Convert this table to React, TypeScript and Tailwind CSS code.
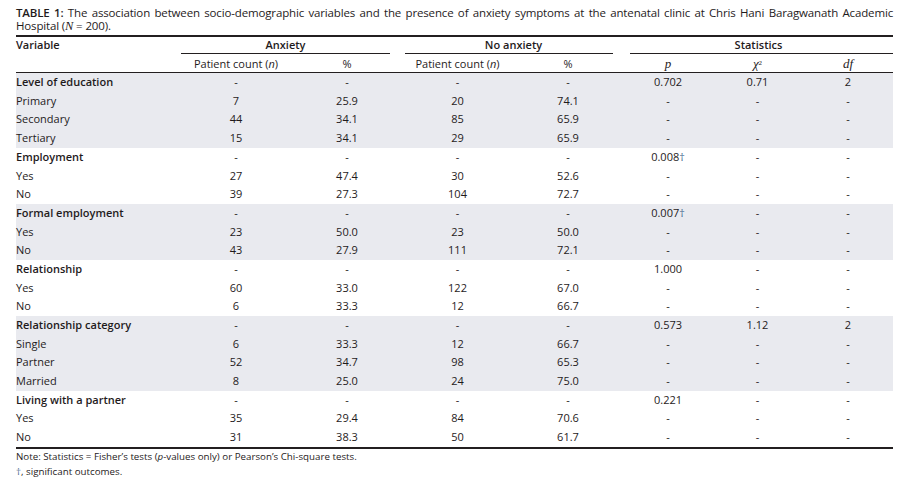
type Row = { label: string; head?: boolean; cells: string[] };

type Group = { rows: Row[] };

const groups: Group[] = [
  {
    rows: [
      { label: "Level of education", head: true, cells: ["-", "-", "-", "-", "0.702", "0.71", "2"] },
      { label: "Primary", cells: ["7", "25.9", "20", "74.1", "-", "-", "-"] },
      { label: "Secondary", cells: ["44", "34.1", "85", "65.9", "-", "-", "-"] },
      { label: "Tertiary", cells: ["15", "34.1", "29", "65.9", "-", "-", "-"] },
    ],
  },
  {
    rows: [
      { label: "Employment", head: true, cells: ["-", "-", "-", "-", "0.008†", "-", "-"] },
      { label: "Yes", cells: ["27", "47.4", "30", "52.6", "-", "-", "-"] },
      { label: "No", cells: ["39", "27.3", "104", "72.7", "-", "-", "-"] },
    ],
  },
  {
    rows: [
      { label: "Formal employment", head: true, cells: ["-", "-", "-", "-", "0.007†", "-", "-"] },
      { label: "Yes", cells: ["23", "50.0", "23", "50.0", "-", "-", "-"] },
      { label: "No", cells: ["43", "27.9", "111", "72.1", "-", "-", "-"] },
    ],
  },
  {
    rows: [
      { label: "Relationship", head: true, cells: ["-", "-", "-", "-", "1.000", "-", "-"] },
      { label: "Yes", cells: ["60", "33.0", "122", "67.0", "-", "-", "-"] },
      { label: "No", cells: ["6", "33.3", "12", "66.7", "-", "-", "-"] },
    ],
  },
  {
    rows: [
      { label: "Relationship category", head: true, cells: ["-", "-", "-", "-", "0.573", "1.12", "2"] },
      { label: "Single", cells: ["6", "33.3", "12", "66.7", "-", "-", "-"] },
      { label: "Partner", cells: ["52", "34.7", "98", "65.3", "-", "-", "-"] },
      { label: "Married", cells: ["8", "25.0", "24", "75.0", "-", "-", "-"] },
    ],
  },
  {
    rows: [
      { label: "Living with a partner", head: true, cells: ["-", "-", "-", "-", "0.221", "-", "-"] },
      { label: "Yes", cells: ["35", "29.4", "84", "70.6", "-", "-", "-"] },
      { label: "No", cells: ["31", "38.3", "50", "61.7", "-", "-", "-"] },
    ],
  },
];

const cols = "grid grid-cols-[165px_110px_112px_109px_112px_88px_91px_90px]";

// dagger is drawn a bit bluer, like in the pdf
function Cell({ value }: { value: string }) {
  if (value.endsWith("†")) {
    return (
      <div className="text-center">
        {value.slice(0, -1)}
        <span className="text-[#4a6b8f]">†</span>
      </div>
    );
  }
  return <div className="text-center">{value}</div>;
}

export default function App() {
  return (
    <div className="w-[904px] h-[488px] bg-white text-[#1f1b1c] font-['Open_Sans',sans-serif]">
      <div className="ml-4 w-[877px]">
        {/* caption */}
        <div className="pt-[6px] text-[11.5px] leading-[13px] tracking-[-0.15px]">
          <div className="text-justify [text-align-last:justify]">
            <span className="font-semibold">TABLE 1:</span> The association between socio-demographic variables and
            the presence of anxiety symptoms at the antenatal clinic at Chris Hani Baragwanath Academic
          </div>
          <div>
            Hospital (<span className="font-['Liberation_Serif',serif] italic text-[12.5px]">N</span> = 200).
          </div>
        </div>

        <div className="mt-[2px] border-t-2 border-[#231f20]" />

        {/* header */}
        <div className="text-[11px]">
          <div className={`${cols} h-[17px] items-start leading-[16px] font-semibold`}>
            <div>Variable</div>
            <div className="col-span-2 text-center mr-[13px] h-[17px] border-b border-[#231f20]">Anxiety</div>
            <div className="col-span-2 text-center ml-[2px] mr-[11px] h-[17px] border-b border-[#231f20]">
              <span className="ml-[-2px] mr-[-11px]">No anxiety</span>
            </div>
            <div className="col-span-3 text-center ml-[6px] h-[17px] border-b border-[#231f20]">
              <span className="ml-[-6px]">Statistics</span>
            </div>
          </div>
          <div className={`${cols} h-[19px] items-center border-b border-[#231f20]`}>
            <div />
            <div className="text-center">
              Patient count (<span className="italic">n</span>)
            </div>
            <div className="text-center">%</div>
            <div className="text-center">
              Patient count (<span className="italic">n</span>)
            </div>
            <div className="text-center">%</div>
            <div className="text-center font-['Liberation_Serif',serif] italic text-[13px]">p</div>
            <div className="text-center font-['Liberation_Serif',serif] italic text-[13px]">
              χ<sup className="text-[7px] not-italic">2</sup>
            </div>
            <div className="text-center font-['Liberation_Serif',serif] italic text-[13px]">df</div>
          </div>
        </div>

        {/* body */}
        <div className="text-[11px]">
          {groups.map((g, gi) => (
            <div key={gi} className={gi % 2 === 0 ? "bg-[#e9eaef]" : "bg-white"}>
              {g.rows.map((r, ri) => (
                <div key={ri} className={`${cols} h-[18.7px] items-center`}>
                  <div className={r.head ? "font-semibold" : ""}>{r.label}</div>
                  {r.cells.map((c, ci) => (
                    <Cell key={ci} value={c} />
                  ))}
                </div>
              ))}
            </div>
          ))}
        </div>

        <div className="border-t-2 border-[#231f20]" />

        {/* notes */}
        <div className="mt-[0.5px] text-[9.75px] leading-[15px]">
          <div>
            Note: Statistics = Fisher’s tests (<span className="italic">p</span>-values only) or Pearson’s Chi-square
            tests.
          </div>
          <div>
            <span className="text-[#4a6b8f]">†</span>, significant outcomes.
          </div>
        </div>
      </div>
    </div>
  );
}
